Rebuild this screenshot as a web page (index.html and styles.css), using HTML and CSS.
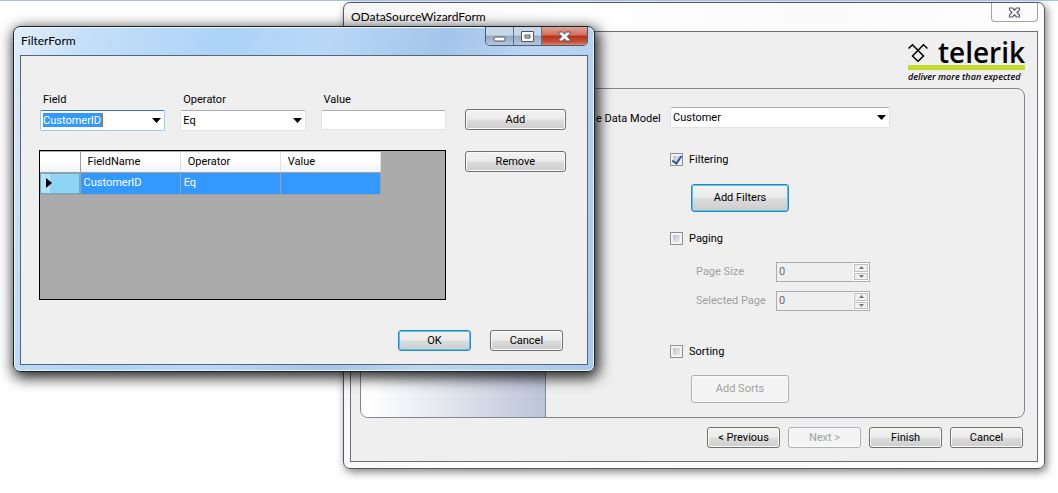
FILE: index.html
```html
<!DOCTYPE html>
<html lang="en">
<head>
<meta charset="utf-8">
<title>ODataSourceWizardForm</title>
<link rel="stylesheet" href="styles.css">
</head>
<body>
<main class="desktop">

<section class="window wizard" aria-label="ODataSourceWizardForm">
  <header class="titlebar">
    <h1 class="title">ODataSourceWizardForm</h1>
    <button class="wizard-close" type="button" aria-label="Close wizard">
      <svg width="13" height="11" viewBox="0 0 13 11"><path d="M1.500 1h3.200l1.800 2.200L8.300 1h3.200v1.800L9 5.500l2.500 2.700V10H8.300L6.500 7.800 4.700 10H1.500V8.200L4 5.500 1.500 2.800z" fill="#fff" stroke="#565b6b" stroke-width="1.200"/></svg>
    </button>
  </header>
  <div class="client">
    <div class="banner">
      <div class="logo">
        <div class="brand">
          <svg class="mark" width="20" height="20" viewBox="0 0 20 20"><path d="M0.500 5.500 4.500 1.800 15.500 13 10 18.300 4.500 13 15.500 1.800 19.500 5.500" fill="none" stroke="#000" stroke-width="1.500"/></svg>
          <span class="wordmark">telerik</span>
        </div>
        <div class="tagline">deliver more than expected</div>
      </div>
    </div>
    <div class="panel">
      <div class="steps"></div>
      <form class="options">
        <label class="model-label" for="model">e Data Model</label>
        <div class="fields">
          <div class="combo model">
            <select id="model"><option>Customer</option></select>
            <svg class="arrow" width="9" height="5" viewBox="0 0 9 5"><path d="M0 0h9L4.500 5z"/></svg>
          </div>
          <label class="check"><input type="checkbox" checked>Filtering</label>
          <button class="btn big default filters" type="button">Add Filters</button>
          <label class="check"><input type="checkbox">Paging</label>
          <div class="paging">
            <label for="size">Page Size</label>
            <div class="spinner">
              <input id="size" type="number" value="0" disabled>
              <div class="spin-buttons">
                <button type="button" disabled aria-label="Increase page size"><svg width="5" height="3" viewBox="0 0 5 3"><path d="M0 3h5L2.500 0z"/></svg></button>
                <button type="button" disabled aria-label="Decrease page size"><svg width="5" height="3" viewBox="0 0 5 3"><path d="M0 0h5L2.500 3z"/></svg></button>
              </div>
            </div>
            <label for="page">Selected Page</label>
            <div class="spinner">
              <input id="page" type="number" value="0" disabled>
              <div class="spin-buttons">
                <button type="button" disabled aria-label="Increase selected page"><svg width="5" height="3" viewBox="0 0 5 3"><path d="M0 3h5L2.500 0z"/></svg></button>
                <button type="button" disabled aria-label="Decrease selected page"><svg width="5" height="3" viewBox="0 0 5 3"><path d="M0 0h5L2.500 3z"/></svg></button>
              </div>
            </div>
          </div>
          <label class="check"><input type="checkbox">Sorting</label>
          <button class="btn big sorts" type="button" disabled>Add Sorts</button>
        </div>
      </form>
    </div>
    <footer class="wizard-actions">
      <button class="btn" type="button">&lt; Previous</button>
      <button class="btn" type="button" disabled>Next &gt;</button>
      <button class="btn" type="button">Finish</button>
      <button class="btn" type="button">Cancel</button>
    </footer>
  </div>
</section>

<section class="window filter" aria-label="FilterForm">
  <header class="titlebar">
    <h2 class="title">FilterForm</h2>
    <div class="caption-buttons">
      <button class="min" type="button" aria-label="Minimize"><svg width="13" height="6" viewBox="0 0 13 6"><rect x="1" y="1" width="11" height="4" rx="1" fill="#fff" stroke="#535666"/></svg></button>
      <button class="max" type="button" aria-label="Maximize"><svg width="13" height="11" viewBox="0 0 13 11"><path d="M.5.5h12v10H.5z" fill="#fff" stroke="#535666"/><path d="M4 4h5v3H4z" fill="#a9bdd3" stroke="#535666"/></svg></button>
      <button class="close" type="button" aria-label="Close"><svg width="13" height="11" viewBox="0 0 13 11"><path d="M1 1h3.700l1.800 2.200L8.300 1H12v1.500L9.200 5.500 12 8.500V10H8.300L6.500 7.800 4.700 10H1V8.500l2.800-3L1 2.500z" fill="#fff" stroke="#535666"/></svg></button>
    </div>
  </header>
  <form class="client filter-client">
    <div class="criteria">
      <div class="field">
        <label for="field">Field</label>
        <div class="combo focused">
          <select id="field"><option>CustomerID</option></select>
          <svg class="arrow" width="9" height="5" viewBox="0 0 9 5"><path d="M0 0h9L4.500 5z"/></svg>
        </div>
      </div>
      <div class="field">
        <label for="operator">Operator</label>
        <div class="combo">
          <select id="operator"><option>Eq</option></select>
          <svg class="arrow" width="9" height="5" viewBox="0 0 9 5"><path d="M0 0h9L4.500 5z"/></svg>
        </div>
      </div>
      <div class="field">
        <label for="value">Value</label>
        <input class="textbox" id="value" type="text">
      </div>
    </div>
    <button class="btn add" type="button">Add</button>
    <div class="gridview">
      <table>
        <thead><tr><th class="rowhead"></th><th>FieldName</th><th>Operator</th><th>Value</th></tr></thead>
        <tbody><tr><td class="rowhead"><svg width="6" height="10" viewBox="0 0 6 10"><path d="M0 0v10l6-5z"/></svg></td><td>CustomerID</td><td>Eq</td><td></td></tr></tbody>
      </table>
    </div>
    <button class="btn remove" type="button">Remove</button>
    <div class="filter-actions">
      <button class="btn default" type="button">OK</button>
      <button class="btn" type="button">Cancel</button>
    </div>
  </form>
</section>

</main>
</body>
</html>
```
FILE: styles.css
```css
* { box-sizing: border-box; }

body {
  margin: 0;
  background: #fff;
  color: #000;
  font: 11px/14px Roboto, "Liberation Sans", sans-serif;
}

button, input, select { font: inherit; color: inherit; margin: 0; }

.desktop {
  position: relative;
  min-height: 100vh;
  overflow: hidden;
  border-top: 1px solid #a3c2eb;
}

/* Window frames */
.window {
  position: absolute;
  border: 1px solid #55585c;
  border-radius: 7px;
  padding: 0 6px 6px;
}
.wizard {
  top: 1px;
  left: 343px;
  right: 13px;
  background: linear-gradient(100deg, #f4f4f4, #fff 28%, #fafafa 60%, #fff);
  box-shadow: 2px 3px 8px rgba(0, 0, 0, .5);
}
.filter {
  top: 25px;
  left: 13px;
  width: 55%;
  border-color: #1c232c;
  background:
    linear-gradient(110deg, #e0eefb 0, #c3def8 12%, #add3f8 30%, #b9d8f7 45%, #a3c5e9 62%, #bcd6f2 75%, #a9c8e9 100%);
  box-shadow: inset 0 0 0 1px #edf6ff, 2px 4px 14px 2px rgba(0, 0, 0, .85);
}
.titlebar {
  display: flex;
  justify-content: space-between;
  align-items: flex-start;
  height: 28px;
}
.title {
  margin: 0;
  padding-left: 1px;
  font: 12px/28px Lato, "Open Sans", sans-serif;
}
.wizard-close {
  display: grid;
  place-items: center;
  width: 47px;
  height: 19px;
  padding: 0;
  border: 1px solid #a0a3a8;
  border-top: 0;
  border-radius: 0 0 4px 4px;
  background: #fcfcfc;
}
.caption-buttons {
  display: flex;
  height: 19px;
  width: 103px;
  border: 1px solid #4a5a70;
  border-top: 0;
  border-radius: 0 0 5px 5px;
  overflow: hidden;
}
.caption-buttons button {
  display: grid;
  place-items: center;
  flex: 28;
  padding: 0;
  border: 0;
  background: linear-gradient(#c8d7e8 0 45%, #95a9c2 50%, #b4c6dc);
}
.caption-buttons .min { padding-top: 5px; }
.caption-buttons .max { border: solid #5f7188; border-width: 0 1px; }
.caption-buttons .close {
  flex: 47;
  background: linear-gradient(#dfa195, #d1705f 45%, #b8301a 50%, #c9543c 85%, #dd8a70);
}
.client {
  border: 1px solid #6c6f75;
  background: #efefef;
}

/* Buttons */
.btn {
  height: 21px;
  padding: 0;
  border: 1px solid #707070;
  border-radius: 3px;
  background: linear-gradient(#f3f3f3, #ebebeb 48%, #dcdcdc 52%, #cdcdcd);
  box-shadow: inset 0 0 0 1px #fbfbfb;
  text-align: center;
}
.btn.default {
  border-color: #3c7fb1;
  box-shadow: inset 0 0 0 1px #48cbf2;
}
.btn:disabled {
  border-color: #adb2b5;
  background: #f4f4f4;
  color: #a0a0a0;
}
.btn.big { width: 98px; height: 28px; margin-left: 21px; }

/* Combo and text boxes */
.combo { position: relative; }
.combo select, .textbox {
  display: block;
  width: 100%;
  height: 21px;
  padding: 0 2px;
  border: 1px solid #e2e3ea;
  border-top-color: #abadb3;
  border-radius: 2px;
  background: #fff;
  appearance: none;
}
.textbox { height: 20px; }
.arrow { position: absolute; right: 4px; top: 8px; pointer-events: none; }
.combo.focused select {
  border-color: #a4c9e3;
  border-top-color: #3d7bad;
  color: #fff;
  background:
    linear-gradient(#39f, #39f) 2px 2px / 59px 14px no-repeat,
    linear-gradient(#cc6a00, #cc6a00) 61px 2px / 1px 14px no-repeat,
    #fff;
}

/* Wizard */
.wizard .client { padding: 10px 12px 13px 9px; }
.banner { display: flex; justify-content: flex-end; height: 46px; }
.logo { width: 117px; }
.brand {
  display: flex;
  justify-content: space-between;
  height: 28px;
  border-bottom: 5px solid #c5d92d;
}
.mark { margin-top: 1px; }
.wordmark { font: 600 28px/21px "Open Sans", sans-serif; }
.tagline {
  font: italic 600 9px/14px "Open Sans", sans-serif;
  white-space: nowrap;
}
.panel {
  display: flex;
  border: 1px solid #82868f;
  border-radius: 8px;
  overflow: hidden;
}
.steps {
  width: 185px;
  border-right: 1px solid #82868f;
  background: linear-gradient(90deg, #fff 5%, #bcc4d8);
}
.options {
  display: flex;
  flex: 1;
  gap: 10px;
  padding: 18px 0 14px 50px;
}
.model-label { width: 64px; padding-top: 5px; white-space: nowrap; }
.fields { display: flex; flex-direction: column; align-items: flex-start; }
.model { width: 220px; margin-bottom: 25px; }
.check {
  display: flex;
  align-items: center;
  gap: 6px;
  height: 13px;
}
.check input {
  appearance: none;
  display: grid;
  place-items: center;
  width: 13px;
  height: 13px;
  border: 1px solid #8e8f8f;
  background: linear-gradient(135deg, #b4b9c4, #f6f6f6);
  box-shadow: inset 0 0 0 2px #f4f4f4;
}
.check input:checked::after {
  content: "";
  width: 4px;
  height: 8px;
  margin-bottom: 2px;
  border: solid #3a4f9a;
  border-width: 0 2px 2px 0;
  transform: rotate(35deg);
}
.filters { margin-top: 18px; margin-bottom: 20px; }
.sorts { margin-top: 17px; }
.paging {
  display: grid;
  grid-template-columns: 70px 94px;
  gap: 9px 10px;
  align-items: center;
  margin: 17px 0 34px 26px;
  color: #a0a0a0;
}
.paging label { white-space: nowrap; }
.spinner {
  display: flex;
  height: 20px;
  border: 1px solid #abadb3;
  background: #efefef;
}
.spinner input {
  flex: 1;
  min-width: 0;
  height: 16px;
  padding: 0 2px;
  border: 0;
  background: none;
  color: #6d6d6d;
  appearance: textfield;
}
.spin-buttons {
  display: flex;
  flex-direction: column;
  gap: 1px;
  width: 16px;
  padding: 1px;
  background: #fff;
}
.spin-buttons button {
  display: grid;
  place-items: center;
  flex: 1;
  padding: 0;
  border: 1px solid #bfbfbf;
  background: #f0f0f0;
}
.spin-buttons svg { fill: #777; }
.wizard-actions {
  display: flex;
  justify-content: flex-end;
  gap: 8px;
  padding: 9px 2px 0 0;
}
.wizard-actions .btn, .filter-actions .btn { width: 73px; }

/* Filter form */
.filter-client {
  display: grid;
  grid-template-columns: 1fr 101px;
  column-gap: 19px;
  align-items: end;
  padding: 37px 21px 13px 18px;
  border-color: #54657c;
}
.criteria {
  display: grid;
  grid-template-columns: repeat(3, 1fr);
  gap: 15px;
  align-items: start;
  padding-left: 1px;
}
.field { display: grid; gap: 3px; }
.field label { padding-left: 3px; }
.add { margin-bottom: 1px; }
.gridview {
  height: 150px;
  margin-top: 19px;
  padding-top: 1px;
  border: 1px solid #000;
  background: #ababab;
}
.remove { align-self: start; margin-top: 20px; }
.gridview table {
  width: 341px;
  table-layout: fixed;
  border-collapse: collapse;
}
.gridview th, .gridview td {
  border-right: 1px solid #a0a0a0;
  border-bottom: 1px solid #a0a0a0;
  text-align: left;
}
.gridview th {
  height: 20px;
  padding: 0 7px;
  border-right-color: #dfe0e3;
  background: linear-gradient(#fff 45%, #f1f2f4);
  font-weight: normal;
}
.gridview td {
  height: 22px;
  padding: 0 3px;
  background: #39f;
  color: #fff;
}
.gridview .rowhead { width: 40px; border-right-color: #a0a0a0; }
.gridview td.rowhead {
  padding-left: 6px;
  background: linear-gradient(90deg, #b5e2f7 25%, #8dd4f5 25%);
  box-shadow: inset 0 0 0 1px #6fa9c8;
}
.rowhead svg { display: block; }
.filter-actions {
  grid-column: 1 / -1;
  display: flex;
  justify-content: flex-end;
  gap: 19px;
  margin-top: 30px;
  padding-right: 3px;
}
```
